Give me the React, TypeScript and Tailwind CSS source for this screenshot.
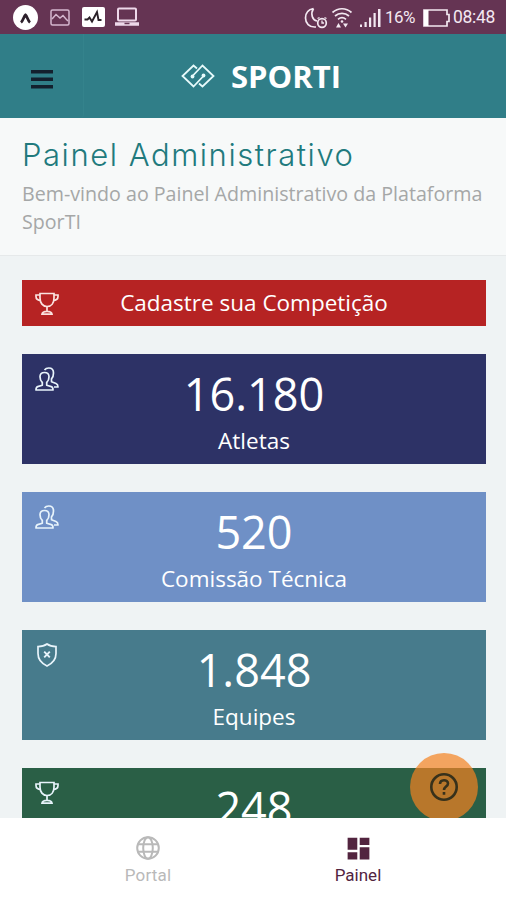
import type { ReactNode } from 'react';
import { MdDashboard } from 'react-icons/md';

const TrophyIcon = () => (
  <svg width="24" height="24" viewBox="0 0 24 24" fill="none" stroke="currentColor" strokeWidth="1.7">
    <path d="M5 1.500h14v4.500c0 5-2.800 8.500-7 8.500s-7-3.500-7-8.500V1.500z" />
    <path d="M5 3H1v1.600c0 2.400 1.500 3.900 5 3.900M19 3h4v1.600c0 2.400-1.500 3.900-5 3.900" />
    <path d="M12 14.500v4.500M7 22.200c.3-2 2.200-2.800 5-2.800s4.700.8 5 2.800H7z" />
  </svg>
);

const UsersIcon = () => (
  <svg width="24" height="24" viewBox="0 0 24 24" fill="none" stroke="currentColor" strokeWidth="1.700" strokeLinejoin="round">
    <path d="M9.500 5.500C6.200 5.500 5 7.300 5 9.800c0 2.600 1 4.600 2.300 5.700v2.700L2.700 19.600C1.300 20 1 20.800 1 23h17c0-2.200-.3-3-1.700-3.400l-4.600-1.400v-2.700c1.300-1.100 2.300-3.100 2.300-5.700 0-2.500-1.200-4.300-4.500-4.300z" />
    <path d="M9.500 3C10.500 1.600 12 1 13.800 1c3.200 0 4.700 2.100 4.700 5 0 2.500-.7 4.500-2 5.800v3l4.500 1.700c1.500.6 2 1.300 2 3.500h-4" />
  </svg>
);

const ShieldIcon = () => (
  <svg width="24" height="24" viewBox="0 0 24 24" fill="none" stroke="currentColor" strokeWidth="1.7">
    <path d="M12 1c2.500 1.900 5.500 2.600 9 2.600v7C21 16.400 17.500 20.500 12 23 6.500 20.500 3 16.400 3 10.600v-7C6.500 3.600 9.500 2.900 12 1z" />
    <path d="M9.200 8.700l5.600 5.600M14.800 8.700l-5.600 5.600" strokeWidth="1.900" />
  </svg>
);

const LogoIcon = () => (
  <svg width="34" height="24" viewBox="0 0 34 24" fill="none" stroke="currentColor" strokeWidth="1.800">
    <path d="M16 4.500L12.500 1.500 1.500 12l11 10.500L22.500 12" />
    <path d="M18 19.500l3.500 3 11-10.500-11-10.500L11.500 12" />
    <circle cx="11.500" cy="12.500" r="1.900" fill="currentColor" stroke="none" />
    <circle cx="22.500" cy="11.500" r="1.900" fill="currentColor" stroke="none" />
  </svg>
);

const StatusBar = () => (
  <div className="flex h-[34px] shrink-0 items-center justify-between bg-[#653453] pr-[11px] pl-[13px] text-[#f3e8f1]">
    <div className="flex items-center">
      <svg width="25" height="25" viewBox="0 0 25 25">
        <circle cx="12.500" cy="12.500" r="12.500" fill="#fff" />
        <path d="M8 17.500c2-1.500 3-6.500 4.500-7.500 1.500 1 2.500 6 4.500 7.500" fill="none" stroke="#2d202b" strokeWidth="2.800" />
      </svg>
      <svg className="ml-3" width="20" height="17" viewBox="0 0 20 17" fill="none" stroke="#d5b7cf" strokeWidth="1.500">
        <rect x="1" y="1" width="18" height="15" rx="1.500" />
        <path d="M2 10l4-4.500 4 3.500 3-2.500 3 3.500 2 2" />
      </svg>
      <svg className="ml-3" width="23" height="20" viewBox="0 0 23 20">
        <rect width="23" height="20" rx="2" fill="#fff" />
        <path d="M2.500 12.500h3l2-2 2.500 4 5-9.500 1.500 8h3" fill="none" stroke="#2b2229" strokeWidth="1.900" />
      </svg>
      <svg className="ml-[9px]" width="26" height="20" viewBox="0 0 26 20" fill="none" stroke="#eed8ea" strokeWidth="2">
        <rect x="4" y="1.500" width="18" height="12" rx="1" />
        <path d="M1 17h24" strokeWidth="3.500" />
        <path d="M10.500 16.500h5" stroke="#653453" strokeWidth="1.500" />
      </svg>
    </div>
    <div className="flex items-center pt-px">
      <svg width="25" height="22" viewBox="0 0 25 22" fill="none" stroke="currentColor" strokeWidth="1.700">
        <path d="M9.500 1.500C4.500 2.500 1.500 6 1.500 11c0 5.500 4 9 9 9h1.500M9.500 1.500C6 7 8.500 13 13 14" />
        <circle cx="18" cy="16" r="4.300" />
        <path d="M18 13.500V16h2M13.500 11.500l2-1M22.500 11.500l-2-1" strokeWidth="1.300" />
      </svg>
      <svg className="ml-[2px]" width="22" height="22" viewBox="0 0 22 22" fill="none" stroke="currentColor" strokeWidth="1.700">
        <path d="M1.500 5.500C7 .5 15 .5 20.500 5.500M4 9c4-3.500 10-3.500 14 0M7 12.300c2.500-2 5.500-2 8 0" />
        <circle cx="11" cy="14.500" r="1.300" fill="currentColor" stroke="none" />
        <path d="M7.500 16l2.500 4.500H5zM14.500 20.500L12 16.500h5z" fill="currentColor" stroke="none" />
      </svg>
      <svg className="ml-[7px]" width="21" height="19" viewBox="0 0 21 19" fill="currentColor">
        <path d="M0 16.500h2V19H0zM4.500 14h2.200v5H4.500zM9 9.500h2.200V19H9zM13.500 5h2.200v14h-2.200zM18 1h2.500v18H18z" />
      </svg>
      <span className="ml-[4px] w-[33px] font-['Roboto',sans-serif] text-[17px] tracking-[-0.5px]">16%</span>
      <svg className="ml-[5px]" width="27" height="18" viewBox="0 0 27 18">
        <path d="M1 1h23v4.500h2v7h-2V17H1z" fill="none" stroke="currentColor" strokeWidth="1.700" />
        <path d="M1 1h4.500v16H1z" fill="#fff" />
      </svg>
      <span className="ml-[3px] font-['Roboto',sans-serif] text-[17.500px] tracking-[-0.3px]">08:48</span>
    </div>
  </div>
);

const Header = () => (
  <header className="relative flex h-[84px] shrink-0 items-center bg-[#307e88]">
    <button className="flex h-full w-[84px] items-center justify-center rounded-b border-r border-[#34838c] pt-[7px]" aria-label="Menu">
      <svg width="22" height="19" viewBox="0 0 22 19" fill="#13202e">
        <path d="M0 0h22v3.500H0zM0 7.500h22V11H0zM0 15h22v3.500H0z" />
      </svg>
    </button>
    <div className="ml-[97px] flex items-center text-[#e7fafb]">
      <LogoIcon />
      <span className="ml-4 font-['Open_Sans',sans-serif] text-[31px] leading-[36px] font-bold text-white">SPORTI</span>
    </div>
  </header>
);

interface StatCardProps {
  icon: ReactNode;
  value: string;
  label?: string;
  color: string;
}

const StatCard = ({ icon, value, label, color }: StatCardProps) => (
  <div className={`relative h-[110px] shrink-0 pt-[9px] text-center text-white ${color}`}>
    <div className="absolute top-[13px] left-[13px] text-[#e8f4fb]">{icon}</div>
    <p className="text-[45px] leading-[62px]">{value}</p>
    {label && <p className="text-[22.500px] leading-[32px]">{label}</p>}
  </div>
);

const stats: StatCardProps[] = [
  { icon: <UsersIcon />, value: '16.180', label: 'Atletas', color: 'bg-[#2d3266]' },
  { icon: <UsersIcon />, value: '520', label: 'Comissão Técnica', color: 'bg-[#6f90c6]' },
  { icon: <ShieldIcon />, value: '1.848', label: 'Equipes', color: 'bg-[#477b8c]' },
  { icon: <TrophyIcon />, value: '248', color: 'bg-[#2a5f46]' },
];

const BottomNav = () => (
  <nav className="flex h-[82px] shrink-0 bg-white px-[43px] pt-[18px] font-['Roboto',sans-serif] text-[17px] leading-5">
    <div className="flex flex-1 flex-col items-center text-[#b9b9b9]">
      <svg width="24" height="24" viewBox="0 0 24 24" fill="none" stroke="currentColor" strokeWidth="2">
        <circle cx="12" cy="12" r="10.800" />
        <ellipse cx="12" cy="12" rx="4.800" ry="10.800" />
        <path d="M2 8.300h20M2 15.700h20" />
      </svg>
      <span className="mt-[5px] tracking-[0.2px]">Portal</span>
    </div>
    <div className="flex flex-1 flex-col items-center text-[#52243f]">
      <MdDashboard size={29} className="-my-[2.5px]" />
      <span className="mt-[5px]">Painel</span>
    </div>
  </nav>
);

export default function App() {
  return (
    <div className="flex h-[900px] w-[506px] flex-col overflow-hidden bg-[#eff3f4] font-['Open_Sans',sans-serif]">
      <StatusBar />
      <Header />

      <section className="h-[138px] shrink-0 border-b border-[#e6e9ea] bg-[#f7f9f9] pt-[17px] pr-[18px] pl-[22px]">
        <h1 className="font-['Inter',sans-serif] text-[31px] leading-10 font-light tracking-[1.550px] whitespace-nowrap text-[#217a7d]">
          Painel Administrativo
        </h1>
        <p className="mt-[5px] text-[19.650px] leading-7 text-[#a5a7a7]">
          Bem-vindo ao Painel Administrativo da Plataforma SporTI
        </p>
      </section>

      <main className="relative flex min-h-0 flex-1 flex-col gap-7 overflow-hidden pt-[24px] pr-[20px] pl-[22px]">
        <button className="relative h-[46px] shrink-0 bg-[#b62323] text-center text-[22.500px] text-white">
          <span className="absolute top-[12px] left-[13px] text-[#fbe3e0]"><TrophyIcon /></span>
          Cadastre sua Competição
        </button>
        {stats.map((s) => (
          <StatCard key={s.value} {...s} />
        ))}

        {/* Help button */}
        <button className="absolute top-[497px] left-[410px] flex h-[68px] w-[68px] items-center justify-center rounded-full bg-[#f58220]/70" aria-label="Ajuda">
          <svg width="30" height="30" viewBox="0 0 30 30" fill="none" stroke="#37311b" strokeWidth="2.600">
            <circle cx="15" cy="15" r="12.700" />
            <path d="M11 12c0-5 8-5 8-.5 0 3-4 3.200-4 6.500M15 20v2.800" />
          </svg>
        </button>
      </main>

      <BottomNav />
    </div>
  );
}
